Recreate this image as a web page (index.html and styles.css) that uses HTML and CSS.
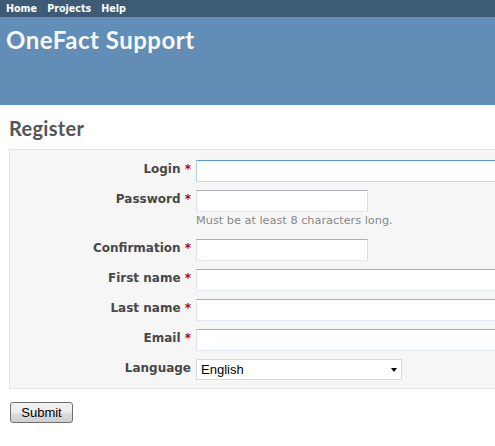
FILE: index.html
```html
<!DOCTYPE html>
<html>
<head>
<meta charset="utf-8">
<title>Register - OneFact Support</title>
<link rel="stylesheet" href="styles.css">
</head>
<body>
<div class="top-menu">
  <a href="#">Home</a>
  <a href="#">Projects</a>
  <a href="#">Help</a>
</div>
<div class="header">
  <h1>OneFact Support</h1>
</div>
<div class="content">
  <h2>Register</h2>
  <form class="box">
    <div class="row">
      <label class="label">Login <span class="required">*</span></label>
      <div class="field"><input class="input wide focused" type="text"></div>
    </div>
    <div class="row">
      <label class="label">Password <span class="required">*</span></label>
      <div class="field">
        <input class="input short" type="password">
        <em class="info">Must be at least 8 characters long.</em>
      </div>
    </div>
    <div class="row">
      <label class="label">Confirmation <span class="required">*</span></label>
      <div class="field"><input class="input short" type="password"></div>
    </div>
    <div class="row">
      <label class="label">First name <span class="required">*</span></label>
      <div class="field"><input class="input wide" type="text"></div>
    </div>
    <div class="row">
      <label class="label">Last name <span class="required">*</span></label>
      <div class="field"><input class="input wide" type="text"></div>
    </div>
    <div class="row">
      <label class="label">Email <span class="required">*</span></label>
      <div class="field"><input class="input wide" type="text"></div>
    </div>
    <div class="row">
      <label class="label">Language</label>
      <div class="field">
        <div class="select-wrap">
          <select class="select"><option>English</option></select>
          <span class="arrow"></span>
        </div>
      </div>
    </div>
  </form>
  <button class="submit" type="button">Submit</button>
</div>
</body>
</html>
```
FILE: styles.css
```css
html, body {
  margin: 0;
  padding: 0;
  overflow: hidden;
  background: #fff;
}
body {
  font-family: "DejaVu Sans", Verdana, sans-serif;
  font-size: 12px;
  color: #333;
}
.top-menu {
  background: #3e5b76;
  height: 17px;
  padding: 0 0 0 6px;
  display: flex;
  gap: 10px;
  align-items: center;
  font-size: 9.6px;
  font-weight: bold;
  line-height: 16px;
}
.top-menu a {
  color: #fff;
  text-decoration: none;
}
.header {
  background: #628db6;
  height: 88px;
  padding: 0 6px;
  color: #f8f8f8;
}
.header h1 {
  margin: 0;
  padding-top: 11px;
  font-family: Lato, "Open Sans", sans-serif;
  font-size: 24px;
  line-height: 24px;
  font-weight: bold;
  letter-spacing: 0.5px;
}
.content {
  padding: 0 0 0 9px;
}
.content h2 {
  margin: 0;
  padding: 13px 0 11px 0;
  font-family: Lato, "Open Sans", sans-serif;
  font-size: 20px;
  line-height: 20px;
  color: #555;
  font-weight: bold;
  letter-spacing: 0.3px;
}
.box {
  overflow: hidden;
  background: #f6f6f6;
  border: 1px solid #e4e4e4;
  border-right: none;
  color: #505050;
  padding: 6px 0 4px 6px;
  margin: 0 0 13px 0;
}
.row {
  display: flex;
  align-items: flex-start;
  gap: 5px;
  padding: 4px 0;
}
.label {
  width: 175px;
  flex: none;
  text-align: right;
  font-weight: bold;
  line-height: 19px;
  color: #484848;
}
.required {
  color: #bb0000;
}
.field {
  display: flex;
  flex-direction: column;
  flex: none;
}
.input {
  box-sizing: border-box;
  height: 22px;
  margin: 0;
  padding: 1px 3px;
  background: #fff;
  border: 1px solid;
  border-color: #abadb3 #dbdfe6 #e3e9ef #e2e3ea;
  font-family: "DejaVu Sans", sans-serif;
  font-size: 12px;
  outline: none;
}
.input.focused {
  border-color: #5a9bd0 #b5cfe7 #c8dce8 #b5cfe7;
}
.input.short {
  width: 172px;
}
.input.wide {
  width: 420px;
}
.info {
  font-style: normal;
  font-size: 11.3px;
  color: #888;
  line-height: 14px;
  margin: 2px 0 3px 0;
}
.select-wrap {
  position: relative;
  width: 206px;
  height: 21px;
}
.select {
  appearance: none;
  -webkit-appearance: none;
  box-sizing: border-box;
  width: 206px;
  height: 21px;
  margin: 0;
  padding: 0 4px;
  background: #fff;
  border: 1px solid #d9d9d9;
  border-radius: 0;
  font-family: "Liberation Sans", Arial, sans-serif;
  font-size: 13px;
  color: #000;
}
.arrow {
  position: absolute;
  right: 5px;
  top: 9px;
  width: 0;
  height: 0;
  border-left: 3.5px solid transparent;
  border-right: 3.5px solid transparent;
  border-top: 4px solid #000;
  pointer-events: none;
}
.submit {
  display: block;
  margin: 0 0 0 1px;
  box-sizing: border-box;
  width: 63px;
  height: 21px;
  padding: 0;
  border: 1px solid #707070;
  border-radius: 3px;
  background: linear-gradient(#f2f2f2 0%, #ebebeb 50%, #dddddd 51%, #cfcfcf 100%);
  font-family: "Liberation Sans", Arial, sans-serif;
  font-size: 13px;
  color: #000;
}
```
